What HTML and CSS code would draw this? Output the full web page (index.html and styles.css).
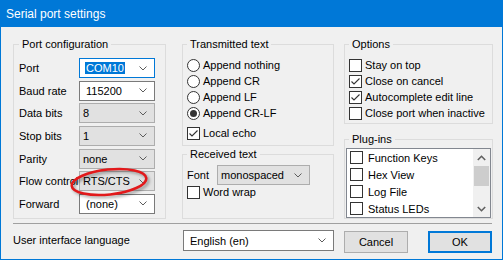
FILE: index.html
```html
<!DOCTYPE html>
<html lang="en">
<head>
    <meta charset="UTF-8">
    <title>Serial port settings</title>
    <link rel="stylesheet" href="styles.css">
</head>
<body>

<div class="window">
    <div class="titlebar">Serial port settings</div>

    <div class="content">
        <div class="groups">

            <fieldset class="group port-group">
                <legend>Port configuration</legend>
                <div class="field-grid">
                    <span class="label">Port</span>
                    <div class="combo edit focused"><span class="selected">COM10</span><svg class="chev" width="8" height="5" viewBox="0 0 8 5"><path d="M0.5 0.5 L4 4 L7.5 0.5"/></svg></div>

                    <span class="label">Baud rate</span>
                    <div class="combo edit"><span>115200</span><svg class="chev" width="8" height="5" viewBox="0 0 8 5"><path d="M0.5 0.5 L4 4 L7.5 0.5"/></svg></div>

                    <span class="label">Data bits</span>
                    <div class="combo list"><span>8</span><svg class="chev" width="8" height="5" viewBox="0 0 8 5"><path d="M0.5 0.5 L4 4 L7.5 0.5"/></svg></div>

                    <span class="label">Stop bits</span>
                    <div class="combo list"><span>1</span><svg class="chev" width="8" height="5" viewBox="0 0 8 5"><path d="M0.5 0.5 L4 4 L7.5 0.5"/></svg></div>

                    <span class="label">Parity</span>
                    <div class="combo list"><span>none</span><svg class="chev" width="8" height="5" viewBox="0 0 8 5"><path d="M0.5 0.5 L4 4 L7.5 0.5"/></svg></div>

                    <span class="label">Flow control</span>
                    <div class="combo list"><span>RTS/CTS</span><svg class="chev" width="8" height="5" viewBox="0 0 8 5"><path d="M0.5 0.5 L4 4 L7.5 0.5"/></svg></div>

                    <span class="label">Forward</span>
                    <div class="combo edit"><span>(none)</span><svg class="chev" width="8" height="5" viewBox="0 0 8 5"><path d="M0.5 0.5 L4 4 L7.5 0.5"/></svg></div>
                </div>
            </fieldset>

            <div class="column mid-column">
                <fieldset class="group tx-group">
                    <legend>Transmitted text</legend>
                    <div class="option"><span class="radio"></span>Append nothing</div>
                    <div class="option"><span class="radio"></span>Append CR</div>
                    <div class="option"><span class="radio"></span>Append LF</div>
                    <div class="option"><span class="radio checked"></span>Append CR-LF</div>
                    <div class="option echo"><span class="check checked"><svg width="11" height="11" viewBox="0 0 11 11"><path d="M1.5 5.5 L4 8 L9.5 2.5"/></svg></span>Local echo</div>
                </fieldset>

                <fieldset class="group rx-group">
                    <legend>Received text</legend>
                    <div class="font-row">
                        <span class="label">Font</span>
                        <div class="combo list font-combo"><span>monospaced</span><svg class="chev" width="8" height="5" viewBox="0 0 8 5"><path d="M0.5 0.5 L4 4 L7.5 0.5"/></svg></div>
                    </div>
                    <div class="option wrap"><span class="check"></span>Word wrap</div>
                </fieldset>
            </div>

            <div class="column right-column">
                <fieldset class="group opt-group">
                    <legend>Options</legend>
                    <div class="option"><span class="check"></span>Stay on top</div>
                    <div class="option"><span class="check checked"><svg width="11" height="11" viewBox="0 0 11 11"><path d="M1.5 5.5 L4 8 L9.5 2.5"/></svg></span>Close on cancel</div>
                    <div class="option"><span class="check checked"><svg width="11" height="11" viewBox="0 0 11 11"><path d="M1.5 5.5 L4 8 L9.5 2.5"/></svg></span>Autocomplete edit line</div>
                    <div class="option"><span class="check"></span>Close port when inactive</div>
                </fieldset>

                <fieldset class="group plug-group">
                    <legend>Plug-ins</legend>
                    <div class="listbox">
                        <div class="list-items">
                            <div class="list-item"><span class="check"></span>Function Keys</div>
                            <div class="list-item"><span class="check"></span>Hex View</div>
                            <div class="list-item"><span class="check"></span>Log File</div>
                            <div class="list-item"><span class="check"></span>Status LEDs</div>
                        </div>
                        <div class="scrollbar">
                            <div class="scroll-btn"><svg width="9" height="6" viewBox="0 0 9 6"><path d="M0.8 5 L4.5 1.3 L8.2 5"/></svg></div>
                            <div class="thumb"></div>
                            <div class="track"></div>
                            <div class="scroll-btn"><svg width="9" height="6" viewBox="0 0 9 6"><path d="M0.8 1 L4.5 4.7 L8.2 1"/></svg></div>
                        </div>
                    </div>
                </fieldset>
            </div>
        </div>

        <div class="separator"></div>

        <div class="bottom-row">
            <span class="label lang-label">User interface language</span>
            <div class="combo edit lang-combo"><span>English (en)</span><svg class="chev" width="8" height="5" viewBox="0 0 8 5"><path d="M0.5 0.5 L4 4 L7.5 0.5"/></svg></div>
            <button class="btn cancel-btn">Cancel</button>
            <button class="btn ok-btn">OK</button>
        </div>
    </div>

    <!-- red marker drawn over the flow control row -->
    <svg class="annotation" width="96" height="44" viewBox="0 0 96 44">
        <ellipse cx="46" cy="20" rx="37.5" ry="12.5" transform="rotate(-6 46 20)"/>
    </svg>
</div>

</body>
</html>
```

FILE: styles.css
```css
* {
    box-sizing: border-box;
}

body {
    margin: 0;
    font-family: "Liberation Sans", Arial, sans-serif;
    font-size: 11px;
    color: #000;
    background: #fff;
}

.window {
    position: relative;
    width: 503px;
    height: 260px;
    background: #0078d7;
}

.titlebar {
    height: 27px;
    padding: 2px 0 0 6px;
    line-height: 25px;
    font-size: 12px;
    color: #fff;
}

.content {
    height: 232px;
    margin: 0 1px;
    padding: 11px 0 0 12px;
    background: #f0f0f0;
}

.groups {
    display: flex;
    align-items: flex-start;
}

.column {
    display: flex;
    flex-direction: column;
}

.group {
    margin: 0;
    padding: 0;
    min-width: 0;
    border: 1px solid #dcdcdc;
}

.group legend {
    padding: 0 3px;
    margin-left: 0;
    line-height: 13px;
    height: 13px;
}

/* port configuration */
.port-group {
    width: 153px;
    margin-right: 16px;
    padding: 7px 0 4px 5px;
}

.field-grid {
    display: grid;
    grid-template-columns: 60px 76px;
    grid-auto-rows: 20px;
    row-gap: 2.67px;
    align-items: center;
}

.label {
    white-space: nowrap;
}

.combo {
    position: relative;
    display: flex;
    align-items: center;
    justify-content: space-between;
    height: 20px;
    white-space: nowrap;
    padding-right: 7px;
}

.combo.edit {
    background: #fff;
    border: 1px solid #7a7a7a;
    padding-left: 6px;
}

.combo.list {
    background: #e1e1e1;
    border: 1px solid #adadad;
    padding-left: 3px;
}

.combo.focused {
    border-color: #0078d7;
}

.combo .selected {
    background: #0078d7;
    color: #fff;
    margin-left: -1px;
    padding: 0 1px;
    line-height: 12px;
}

.chev {
    flex: none;
}

.chev path {
    fill: none;
    stroke: #5c5c5c;
    stroke-width: 1;
}

/* radios and checkboxes */
.option {
    display: flex;
    align-items: center;
    height: 16px;
    white-space: nowrap;
}

.radio,
.check {
    flex: none;
    display: inline-flex;
    align-items: center;
    justify-content: center;
    width: 13px;
    height: 13px;
    margin-right: 3px;
    background: #fff;
    border: 1px solid #333;
}

.radio {
    border-radius: 50%;
}

.radio.checked::after {
    content: "";
    width: 7px;
    height: 7px;
    border-radius: 50%;
    background: #333;
}

.check svg path {
    fill: none;
    stroke: #333;
    stroke-width: 1.1;
}

.mid-column {
    width: 152px;
    margin-right: 10px;
}

.tx-group {
    padding: 6px 0 4px 4px;
}

.tx-group .echo {
    margin-top: 4px;
}

.rx-group {
    margin-top: 2px;
    padding: 4px 0 19px 4px;
}

.font-row {
    display: flex;
    align-items: center;
    height: 20px;
}

.font-row .label {
    width: 30px;
}

.font-combo {
    width: 93px;
    padding-left: 3px;
}

.rx-group .wrap {
    height: 14px;
}

/* options and plug-ins */
.right-column {
    width: 149px;
}

.opt-group {
    padding: 6px 0 2px 4px;
}

.plug-group {
    margin-top: 9px;
    padding: 2px 1px 0 1px;
}

.plug-group legend {
    margin-left: 3px;
}

.listbox {
    display: flex;
    height: 70px;
    background: #fff;
    border: 1px solid #828790;
}

.list-items {
    flex: 1;
    padding-left: 3px;
}

.list-item {
    display: flex;
    align-items: center;
    height: 17px;
    white-space: nowrap;
}

.list-item .check {
    margin-right: 5px;
}

.scrollbar {
    width: 17px;
    display: flex;
    flex-direction: column;
    background: #f0f0f0;
}

.scroll-btn {
    height: 17px;
    display: flex;
    align-items: center;
    justify-content: center;
}

.scroll-btn path {
    fill: none;
    stroke: #606060;
    stroke-width: 1.6;
}

.thumb {
    height: 20px;
    margin: 0 1px;
    background: #cdcdcd;
}

.track {
    flex: 1;
}

/* bottom part */
.separator {
    height: 1px;
    width: 479px;
    margin-top: 4px;
    background: #a0a0a0;
}

.bottom-row {
    display: flex;
    align-items: flex-start;
    margin-top: 6px;
}

.lang-label {
    width: 170px;
    line-height: 21px;
}

.lang-combo {
    width: 151px;
    height: 21px;
    padding-left: 5px;
}

.btn {
    height: 22px;
    margin-top: 1px;
    padding: 0;
    font-family: inherit;
    font-size: 11px;
    color: #000;
    background: #e1e1e1;
    border: 1px solid #adadad;
}

.cancel-btn {
    width: 64px;
    margin-left: 10px;
}

.ok-btn {
    width: 64px;
    margin-left: 20px;
    border: 2px solid #0078d7;
}

.annotation {
    position: absolute;
    left: 63px;
    top: 162px;
    overflow: visible;
    filter: drop-shadow(2px 2px 1.5px rgba(0, 0, 0, 0.35));
}

.annotation ellipse {
    fill: none;
    stroke: #e2191b;
    stroke-width: 2.6;
}
```
